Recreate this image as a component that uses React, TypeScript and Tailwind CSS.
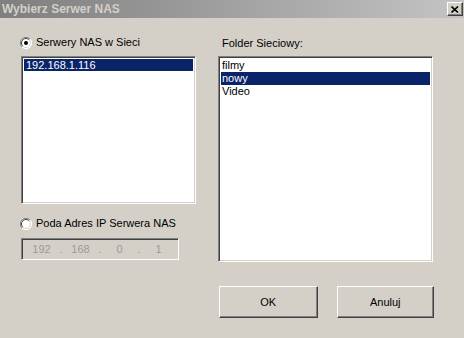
import React from 'react'

const sunken =
  'border border-t-[#808080] border-l-[#808080] border-r-white border-b-white shadow-[inset_1px_1px_0_#404040,inset_-1px_-1px_0_#d4d0c8]'
const raised =
  'border border-t-white border-l-white border-r-[#404040] border-b-[#404040] shadow-[inset_-1px_-1px_0_#808080,inset_1px_1px_0_#d4d0c8]'

function Radio({ checked }: { checked?: boolean }) {
  return (
    <svg width="12" height="12" viewBox="0 0 12 12" className="shrink-0">
      <circle cx="6" cy="6" r="5.5" fill="#fff" />
      <path d="M10 2 A5.5 5.5 0 0 0 2 10" fill="none" stroke="#808080" strokeWidth="1" />
      <path d="M9.2 2.8 A4.5 4.5 0 0 0 2.8 9.2" fill="none" stroke="#404040" strokeWidth="1" />
      <path d="M2 10 A5.5 5.5 0 0 0 10 2" fill="none" stroke="#ffffff" strokeWidth="1" />
      <path d="M2.8 9.2 A4.5 4.5 0 0 0 9.2 2.8" fill="none" stroke="#d4d0c8" strokeWidth="1" />
      {checked && <circle cx="6" cy="6" r="2" fill="#000" />}
    </svg>
  )
}

function IpField() {
  const parts = ['192', '168', '0', '1']
  return (
    <div className={`ml-px mt-[8px] flex h-[22px] w-[158px] items-center pl-[4px] text-[#9a9a9a] ${sunken}`}>
      {parts.map((p, i) => (
        <React.Fragment key={i}>
          <span className="w-[31px] text-center">{p}</span>
          {i < 3 && <span className="w-[8px] text-center">.</span>}
        </React.Fragment>
      ))}
    </div>
  )
}

export default function App() {
  return (
    <div
      className="h-[338px] w-[464px] overflow-hidden bg-[#d4d0c8] text-[11px] leading-[13px] text-black"
      style={{ fontFamily: '"Liberation Sans", Arial, sans-serif' }}
    >
      {/* Title bar */}
      <div className="flex h-[18px] items-center justify-between bg-gradient-to-r from-[#7f7f7f] to-[#c4c4c4] pl-[2px] pr-[1px]">
        <span className="text-[12px] font-bold text-[#d4d0c8]">Wybierz Serwer NAS</span>
        <div className={`flex h-[14px] w-[16px] items-center justify-center bg-[#d4d0c8] ${raised}`}>
          <svg width="8" height="7" viewBox="0 0 8 7">
            <path d="M0.5 0.5 L7 6.5 M7 0.5 L0.5 6.5" stroke="#000" strokeWidth="1.6" />
          </svg>
        </div>
      </div>

      <div className="flex gap-[22px] pl-[20px]">
        {/* Left column */}
        <div className="flex w-[176px] flex-col">
          <label className="mt-[18px] flex h-[13px] items-center gap-[4px]">
            <Radio checked />
            <span>Serwery NAS w Sieci</span>
          </label>
          <div className={`ml-px mt-[7px] h-[148px] w-[175px] bg-white p-[2px] ${sunken}`}>
            <div className="h-[12px] bg-[#0a246a] pl-[2px] leading-[12px] text-white">192.168.1.116</div>
          </div>
          <label className="mt-[13px] flex h-[13px] items-center gap-[4px]">
            <Radio />
            <span>Poda Adres IP Serwera NAS</span>
          </label>
          <IpField />
        </div>

        {/* Right column */}
        <div className="flex w-[216px] flex-col">
          <div className="mt-[19px] pl-[4px]">Folder Sieciowy:</div>
          <div className={`mt-[6px] h-[206px] w-[215px] bg-white p-[2px] ${sunken}`}>
            <div className="h-[13px] pl-px">filmy</div>
            <div className="h-[13px] bg-[#0a246a] pl-px text-white">nowy</div>
            <div className="h-[13px] pl-px">Video</div>
          </div>
          <div className="mt-[24px] flex gap-[19px] pl-px">
            <button className={`h-[32px] w-[100px] bg-[#d4d0c8] ${raised}`}>OK</button>
            <button className={`h-[32px] w-[99px] bg-[#d4d0c8] ${raised}`}>Anuluj</button>
          </div>
        </div>
      </div>
    </div>
  )
}
